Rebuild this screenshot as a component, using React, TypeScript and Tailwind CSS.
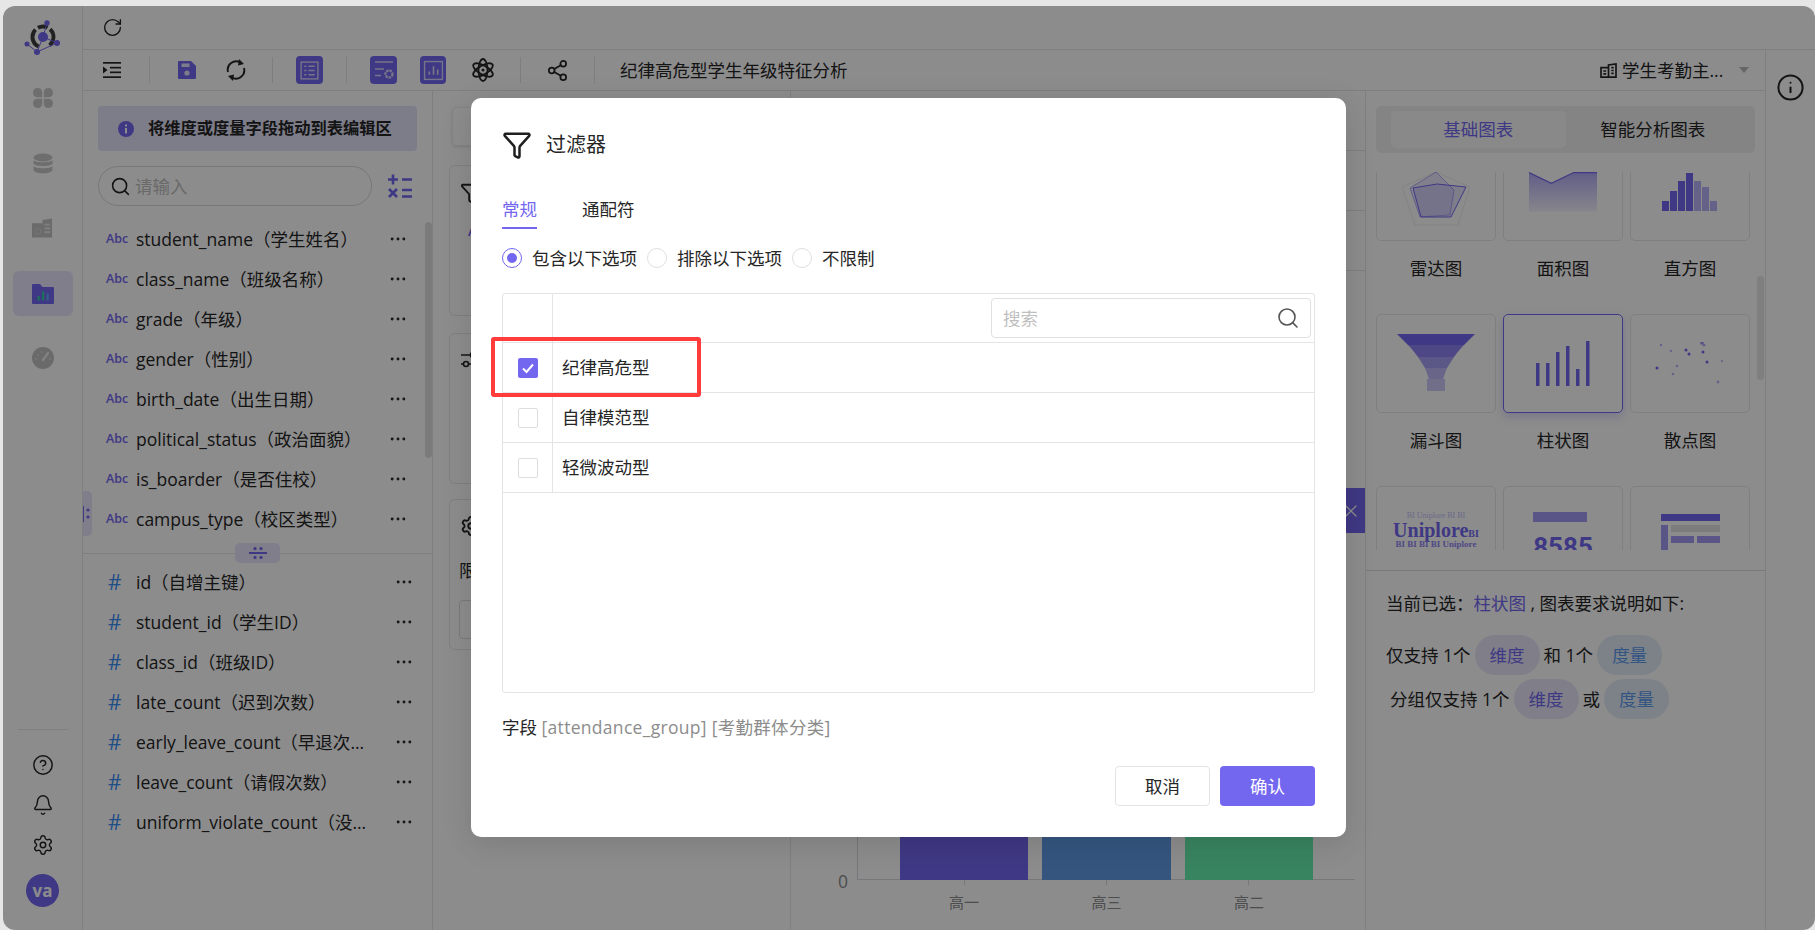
import type { ReactNode } from 'react';
import { Bell, CircleHelp, Ellipsis, Funnel, RotateCw, Search, Settings, Share2, Info, X } from 'lucide-react';

const stringFields = [
  'student_name（学生姓名）',
  'class_name（班级名称）',
  'grade（年级）',
  'gender（性别）',
  'birth_date（出生日期）',
  'political_status（政治面貌）',
  'is_boarder（是否住校）',
  'campus_type（校区类型）',
];

const numberFields = [
  'id（自增主键）',
  'student_id（学生ID）',
  'class_id（班级ID）',
  'late_count（迟到次数）',
  'early_leave_count（早退次数）',
  'leave_count（请假次数）',
  'uniform_violate_count（没穿校服次数）',
];

const filterRows = ['纪律高危型', '自律模范型', '轻微波动型'];

function Logo() {
  return (
    <svg viewBox="0 0 40 40" className="h-[40px] w-[40px]">
      <circle
        cx="20"
        cy="20"
        r="10.5"
        fill="none"
        stroke="#3c3c3c"
        strokeWidth="4"
        strokeDasharray="20 3 10 3 18 12"
        transform="rotate(115 20 20)"
      />
      <path d="M24 6L20 20L34 26M20 20L14 35L4 27M14 35L34 26" stroke="#7367f0" strokeWidth="1" fill="none" />
      <circle cx="20" cy="20" r="5" fill="#7367f0" />
      <circle cx="24" cy="6" r="2.700" fill="#7367f0" />
      <circle cx="4" cy="27" r="2.500" fill="#7367f0" />
      <circle cx="14" cy="35" r="3" fill="#7367f0" />
      <circle cx="34" cy="26" r="3" fill="#7367f0" />
    </svg>
  );
}

function Clover() {
  return (
    <svg viewBox="0 0 22 22" className="h-[22px] w-[22px]" fill="#c9c9c9">
      <path d="M10.2 10.2H5A4.600 4.600 0 1 1 10.2 5Z" />
      <path d="M11.8 10.2H17A4.600 4.600 0 1 0 11.8 5Z" />
      <path d="M10.2 11.8H5A4.600 4.600 0 1 0 10.2 17Z" />
      <path d="M11.8 11.8H17A4.600 4.600 0 1 1 11.8 17Z" />
    </svg>
  );
}

function Database() {
  return (
    <svg viewBox="0 0 22 22" className="h-[22px] w-[22px]" fill="#c9c9c9">
      <ellipse cx="11" cy="4.500" rx="9.500" ry="4" />
      <path d="M1.500 7C3 10 19 10 20.500 7V10.500C19 14 3 14 1.500 10.500Z" />
      <path d="M1.500 13C3 16 19 16 20.500 13V17C19 21.500 3 21.500 1.500 17Z" />
    </svg>
  );
}

function Building() {
  return (
    <svg viewBox="0 0 22 20" className="h-[20px] w-[21px]">
      <path d="M0 5H11V1.500L21 0V20H0Z" fill="#c4c4c4" />
      <path d="M13 5.500H19V7.500H13ZM13 9.500H19V11.500H13ZM13 13.500H19V15.500H13Z" fill="#e6e6e6" />
      <path d="M4 11H9V16H4Z" fill="none" stroke="#dadada" strokeWidth="0.800" />
    </svg>
  );
}

function FolderChart() {
  return (
    <svg viewBox="0 0 22 20" className="h-[20px] w-[22px]">
      <path d="M0 1A1 1 0 0 1 1 0H8L10.500 3H21A1 1 0 0 1 22 4V19A1 1 0 0 1 21 20H1A1 1 0 0 1 0 19Z" fill="#7367f0" />
      <rect x="5.500" y="12" width="2.300" height="4.500" fill="#36c9a5" />
      <rect x="10" y="7.500" width="2.300" height="9" fill="#36c9a5" />
      <rect x="14.500" y="9.500" width="2.300" height="7" fill="#5fa8f5" />
    </svg>
  );
}

function Gauge() {
  return (
    <svg viewBox="0 0 22 22" className="h-[22px] w-[22px]">
      <circle cx="11" cy="11" r="11" fill="#c2c2c2" />
      <path d="M11 13L16 6" stroke="#ececec" strokeWidth="2.200" strokeLinecap="round" />
      <circle cx="6" cy="8" r="1" fill="#d9d9d9" />
      <circle cx="10" cy="5" r="1" fill="#d9d9d9" />
      <circle cx="18" cy="12" r="1" fill="#d9d9d9" />
      <circle cx="4" cy="12" r="1" fill="#d9d9d9" />
    </svg>
  );
}

function IndentIcon() {
  return (
    <svg viewBox="0 0 18 16" className="h-[16px] w-[18px]" fill="#262626">
      <rect x="0" y="0" width="18" height="1.700" />
      <rect x="0" y="14.300" width="18" height="1.700" />
      <rect x="7" y="4.800" width="11" height="1.700" />
      <rect x="7" y="9.500" width="11" height="1.700" />
      <path d="M0 4.500L4.500 8L0 11.500Z" />
    </svg>
  );
}

function SaveIcon() {
  return (
    <svg viewBox="0 0 18 18" className="h-[18px] w-[18px]">
      <path d="M1 0H13L18 5V17A1 1 0 0 1 17 18H1A1 1 0 0 1 0 17V1A1 1 0 0 1 1 0Z" fill="#7367f0" />
      <rect x="3.500" y="2.500" width="8" height="3.500" fill="#e4e2fb" />
      <circle cx="9" cy="12" r="2.600" fill="#e4e2fb" />
    </svg>
  );
}

function SyncIcon() {
  return (
    <svg viewBox="0 0 20 22" className="h-[22px] w-[20px]" fill="none" stroke="#262626" strokeWidth="1.900">
      <path d="M2 13A8.500 8.500 0 0 1 14.500 3.500" />
      <path d="M18 9A8.500 8.500 0 0 1 5.500 18.500" />
      <path d="M13 0L18 5L12 6.500Z" fill="#262626" stroke="none" />
      <path d="M7 22L2 17L8 15.500Z" fill="#262626" stroke="none" />
    </svg>
  );
}

function AtomIcon() {
  return (
    <svg viewBox="0 0 22 24" className="h-[24px] w-[22px]" fill="none" stroke="#262626" strokeWidth="1.800">
      <ellipse cx="11" cy="12" rx="4.500" ry="11" />
      <ellipse cx="11" cy="12" rx="4.500" ry="11" transform="rotate(60 11 12)" />
      <ellipse cx="11" cy="12" rx="4.500" ry="11" transform="rotate(-60 11 12)" />
      <circle cx="11" cy="12" r="1.500" fill="#262626" stroke="none" />
    </svg>
  );
}

function ToolButton({ children }: { children: ReactNode }) {
  return (
    <div className="flex h-[28px] w-[27px] items-center justify-center rounded-[4px] bg-[#7367f0]">{children}</div>
  );
}

function ListIcon() {
  return (
    <svg viewBox="0 0 20 20" className="h-[21px] w-[21px]" fill="none" stroke="#d7d4f8" strokeWidth="1.300">
      <rect x="2" y="2" width="16" height="16" />
      <path d="M5 6H7M5 10H7M5 14H7M9 6H15M9 10H15M9 14H15" />
    </svg>
  );
}

function ConfigIcon() {
  return (
    <svg viewBox="0 0 22 22" className="h-[22px] w-[22px]" fill="none">
      <path d="M2 3H20M2 10H11M2 16.500H8" stroke="#d7d4f8" strokeWidth="1.700" />
      <circle cx="16" cy="15" r="3.500" stroke="#d7d4f8" strokeWidth="2.400" strokeDasharray="2.500 0.800" />
    </svg>
  );
}

function BarsIcon() {
  return (
    <svg viewBox="0 0 20 20" className="h-[21px] w-[21px]" fill="none" stroke="#d7d4f8" strokeWidth="1.300">
      <rect x="1.500" y="1.500" width="17" height="17" />
      <path d="M6 14V11M10 14V6M14 14V9" strokeWidth="1.600" />
    </svg>
  );
}

function CalcIcon() {
  return (
    <svg viewBox="0 0 26 26" className="h-[26px] w-[26px]" stroke="#7367f0" strokeWidth="2.600" fill="none">
      <path d="M1 6.500H11M6 1.500V11.500M15 6.500H25" />
      <path d="M2 16L10 24M10 16L2 24M15 17H25M15 23.500H25" />
    </svg>
  );
}

function Divider() {
  return <div className="h-[26px] w-px shrink-0 bg-[#e6e6e6]" />;
}

function FieldRow({ label, kind }: { label: string; kind: 'abc' | 'num' }) {
  return (
    <div className="flex h-[40px] items-center">
      {kind === 'abc' ? (
        <span className="w-[53px] pl-[23px] text-[12.500px] font-semibold leading-none text-[#7367f0]">Abc</span>
      ) : (
        <span className="w-[53px] pl-[25px] text-[21px] leading-none text-[#3a8cf5]">#</span>
      )}
      <span className={`truncate text-[#262626] ${kind === 'abc' ? 'w-[252px]' : 'w-[238px]'}`}>{label}</span>
      <Ellipsis className={`h-[20px] w-[20px] text-[#262626] ${kind === 'abc' ? '' : 'ml-[20px]'}`} strokeWidth={1.500} />
    </div>
  );
}

function Card({ selected, label, children }: { selected?: boolean; label?: string; children: ReactNode }) {
  return (
    <div className="flex flex-col items-center">
      <div
        className={`flex h-[99px] w-[120px] items-center justify-center overflow-hidden rounded-[5px] border ${
          selected ? 'border-[#7367f0] shadow-[0_4px_10px_rgba(115,103,240,0.25)]' : 'border-[#e8e8e8]'
        }`}
      >
        {children}
      </div>
      {label && <div className="mt-[15px] h-[24px] leading-[24px] text-[#262626]">{label}</div>}
    </div>
  );
}

function Pill({ color, children }: { color: 'violet' | 'blue'; children: ReactNode }) {
  return (
    <span
      className={`mx-[4px] inline-flex h-[40px] w-[65px] items-center justify-center rounded-full ${
        color === 'violet' ? 'bg-[#e9e6f7] text-[#7367f0]' : 'bg-[#e4edf7] text-[#5b9bef]'
      }`}
    >
      {children}
    </span>
  );
}

function FilterDialog() {
  return (
    <div className="absolute left-[471px] top-[98px] h-[739px] w-[875px] rounded-[10px] bg-white px-[31px] text-[17.500px] text-[#262626] shadow-[0_6px_30px_rgba(0,0,0,0.12)]">
      <div className="flex h-[60px] items-center pt-[33px]">
        <Funnel className="h-[30px] w-[30px] text-[#1f1f1f]" strokeWidth={2} />
        <span className="ml-[14px] text-[20px]">过滤器</span>
      </div>
      <div className="mt-[30px] flex h-[41px] items-start gap-[45px] pt-[8px]">
        <div className="h-[33px] border-b-2 border-[#7367f0] text-[#7367f0]">常规</div>
        <div>通配符</div>
      </div>
      <div className="mt-[17px] flex h-[24px] items-center">
        <span className="flex h-[20px] w-[20px] items-center justify-center rounded-full border border-[#7367f0]">
          <span className="h-[10px] w-[10px] rounded-full bg-[#7367f0]" />
        </span>
        <span className="ml-[10px] mr-[10px]">包含以下选项</span>
        <span className="h-[20px] w-[20px] rounded-full border border-[#e0e0e0]" />
        <span className="ml-[10px] mr-[10px]">排除以下选项</span>
        <span className="h-[20px] w-[20px] rounded-full border border-[#e0e0e0]" />
        <span className="ml-[10px]">不限制</span>
      </div>
      <div className="relative mt-[23px] h-[400px] w-[813px] rounded-[3px] border border-[#e4e4e4]">
        <div className="flex h-[49px] border-b border-[#e4e4e4]">
          <div className="w-[50px] border-r border-[#e4e4e4]" />
          <div className="flex flex-1 items-center justify-end pr-[3px]">
            <div className="flex h-[40px] w-[320px] items-center justify-between rounded-[4px] border border-[#e0e0e0] pl-[11px] pr-[10px]">
              <span className="text-[#bfbfbf]">搜索</span>
              <Search className="h-[24px] w-[24px] text-[#555555]" strokeWidth={1.600} />
            </div>
          </div>
        </div>
        {filterRows.map((row, i) => (
          <div key={row} className="flex h-[50px] border-b border-[#e4e4e4]">
            <div className="flex w-[50px] items-center justify-center border-r border-[#e4e4e4]">
              {i === 0 ? (
                <span className="flex h-[20px] w-[20px] items-center justify-center rounded-[2px] bg-[#7367f0]">
                  <svg viewBox="0 0 14 14" className="h-[14px] w-[14px]" fill="none" stroke="white" strokeWidth="2">
                    <path d="M2 7.500L5.500 11L12 3.500" />
                  </svg>
                </span>
              ) : (
                <span className="h-[20px] w-[20px] rounded-[2px] border border-[#dddddd]" />
              )}
            </div>
            <div className="flex items-center pl-[9px]">{row}</div>
          </div>
        ))}
        <div className="absolute left-[-12px] top-[43px] h-[60px] w-[210px] rounded-[3px] border-[4px] border-[#ff3b3b]" />
      </div>
      <div className="mt-[22px] h-[24px] leading-[24px]">
        字段 <span className="tracking-[0.3px] text-[#8c8c8c]">[attendance_group] [考勤群体分类]</span>
      </div>
      <div className="mt-[27px] flex justify-end gap-[10px]">
        <button className="h-[40px] w-[95px] rounded-[4px] border border-[#e4e4e4] bg-white">取消</button>
        <button className="h-[40px] w-[95px] rounded-[4px] bg-[#7367f0] text-white">确认</button>
      </div>
    </div>
  );
}

export default function App() {
  return (
    <div
      className="relative h-[930px] w-[1815px] overflow-hidden bg-[#e6e6e6] pl-[3px] pt-[6px] text-[17.500px]"
      style={{ fontFamily: '"Open Sans", "Noto Sans CJK SC", sans-serif' }}
    >
      <div className="flex h-[924px] w-[1812px] overflow-hidden rounded-[12px] bg-white">
        <aside className="flex w-[80px] shrink-0 flex-col items-center border-r border-[#e8e8e8]">
          <div className="mt-[11px] h-[40px] w-[40px]">
            <Logo />
          </div>
          <div className="mt-[30px] flex h-[22px] items-center"><Clover /></div>
          <div className="mt-[44px] flex h-[22px] items-center"><Database /></div>
          <div className="mt-[42px] flex h-[22px] items-center"><Building /></div>
          <div className="mt-[32px] flex h-[45px] w-[60px] items-center justify-center rounded-[6px] bg-[#e8e6fb]"><FolderChart /></div>
          <div className="mt-[31px] flex h-[22px] items-center"><Gauge /></div>
          <div className="mt-auto h-px w-[50px] bg-[#e8e8e8]" />
          <div className="mt-[24px] flex flex-col items-center gap-[18px] text-[#262626]">
            <CircleHelp className="h-[22px] w-[22px]" strokeWidth={1.600} />
            <Bell className="h-[22px] w-[22px]" strokeWidth={1.600} />
            <Settings className="h-[22px] w-[22px]" strokeWidth={1.600} />
          </div>
          <div className="mb-[23px] mt-[18px] flex h-[33px] w-[33px] items-center justify-center rounded-full bg-[#7367f0] text-[17px] font-bold leading-none text-white">va</div>
        </aside>

        <div className="flex min-w-0 flex-1 flex-col">
          <div className="flex h-[44px] items-center border-b border-[#e8e8e8] pl-[19px]">
            <RotateCw className="h-[21px] w-[21px] text-[#262626]" strokeWidth={1.600} />
          </div>

          <div className="flex min-h-0 flex-1">
            <div className="flex w-[1682px] shrink-0 flex-col">
              <div className="flex h-[41px] items-center border-b border-[#e8e8e8] text-[#262626]">
                <div className="flex w-[66px] shrink-0 justify-center pr-[8px]"><IndentIcon /></div>
                <Divider />
                <div className="flex w-[73px] shrink-0 justify-center"><SaveIcon /></div>
                <div className="flex w-[26px] shrink-0 justify-center"><SyncIcon /></div>
                <div className="w-[23px] shrink-0" />
                <Divider />
                <div className="flex w-[73px] shrink-0 justify-center"><ToolButton><ListIcon /></ToolButton></div>
                <Divider />
                <div className="flex w-[73px] shrink-0 justify-center"><ToolButton><ConfigIcon /></ToolButton></div>
                <div className="flex w-[26px] shrink-0 justify-center"><ToolButton><BarsIcon /></ToolButton></div>
                <div className="flex w-[74px] shrink-0 justify-center"><AtomIcon /></div>
                <Divider />
                <div className="flex w-[73px] shrink-0 justify-center"><Share2 className="h-[23px] w-[23px]" strokeWidth={1.800} /></div>
                <Divider />
                <span className="ml-[25px] whitespace-nowrap">纪律高危型学生年级特征分析</span>
                <div className="ml-auto flex shrink-0 items-center pr-[16px]">
                  <svg viewBox="0 0 18 16" className="h-[15px] w-[17px]" fill="none" stroke="#262626" strokeWidth="1.800">
                    <path d="M1 5H9V15H1ZM9 15V2L17 1V15H1M3.500 8.500H6.500M3.500 11.500H6.500M12 5H14.500M12 8H14.500M12 11H14.500" />
                  </svg>
                  <span className="ml-[5px] w-[102px] whitespace-nowrap">学生考勤主...</span>
                  <span className="ml-[15px] h-0 w-0 border-x-[5px] border-t-[6px] border-x-transparent border-t-[#bbbbbb]" />
                </div>
              </div>

              <div className="flex min-h-0 flex-1">
                <section className="relative flex w-[350px] shrink-0 flex-col border-r border-[#e8e8e8]">
                  <div className="px-[15px] pt-[15px]">
                    <div className="flex h-[45px] w-[319px] items-center rounded-[4px] bg-[#e4e3fa] pl-[20px] text-[16.250px] font-semibold text-[#262626]">
                      <svg viewBox="0 0 16 16" className="mr-[14px] h-[16px] w-[16px] shrink-0">
                        <circle cx="8" cy="8" r="8" fill="#7367f0" />
                        <rect x="7" y="7" width="2" height="5.500" fill="white" />
                        <rect x="7" y="3.500" width="2" height="2" fill="white" />
                      </svg>
                      将维度或度量字段拖动到表编辑区
                    </div>
                    <div className="mt-[15px] flex items-center">
                      <div className="flex h-[40px] w-[274px] items-center rounded-full border border-[#d9d9d9] pl-[11px]">
                        <Search className="h-[21px] w-[21px] text-[#262626]" strokeWidth={1.800} />
                        <span className="ml-[4px] text-[#bfbfbf]">请输入</span>
                      </div>
                      <div className="ml-[15px]"><CalcIcon /></div>
                    </div>
                  </div>
                  <div className="mt-[13px]">
                    {stringFields.map((f) => (
                      <FieldRow key={f} label={f} kind="abc" />
                    ))}
                  </div>
                  <div className="absolute right-0 top-[131px] h-[236px] w-[7px] rounded-full bg-[#e0e0e0]" />
                  <div className="absolute left-0 top-[400px] flex h-[45px] w-[9px] items-center justify-center rounded-r-[5px] bg-[#e8e6fb]">
                    <svg viewBox="0 0 9 16" className="h-[16px] w-[9px]" fill="#7367f0">
                      <rect x="0" y="0" width="1" height="16" />
                      <circle cx="5" cy="4" r="1.600" />
                      <circle cx="5" cy="11" r="1.600" />
                    </svg>
                  </div>
                  <div className="relative mt-[14px] border-t border-[#e8e8e8]">
                    <div className="absolute left-[152px] top-[-11px] flex h-[20px] w-[45px] items-center justify-center rounded-[5px] bg-[#e8e6fb]">
                      <svg viewBox="0 0 18 12" className="h-[12px] w-[18px]" fill="#7367f0">
                        <circle cx="6" cy="1.600" r="1.600" />
                        <circle cx="12" cy="1.600" r="1.600" />
                        <rect x="0" y="5" width="18" height="2" />
                        <circle cx="6" cy="10.400" r="1.600" />
                        <circle cx="12" cy="10.400" r="1.600" />
                      </svg>
                    </div>
                  </div>
                  <div className="mt-[8px]">
                    {numberFields.map((f) => (
                      <FieldRow key={f} label={f} kind="num" />
                    ))}
                  </div>
                </section>

                <section className="flex w-[358px] shrink-0 flex-col border-r border-[#e8e8e8] pl-[16px] pt-[16px]">
                  <div className="ml-[3px] h-[39px] rounded-[4px] border border-[#eeeeee] shadow-sm" />
                  <div className="mt-[19px] h-[151px] rounded-[6px] border border-[#e8e8e8] pl-[10px] pt-[16px] text-[#262626]">
                    <Funnel className="h-[22px] w-[22px]" />
                    <div className="mt-[16px] pl-[8px] text-[14px] font-semibold text-[#7367f0]">Abc</div>
                  </div>
                  <div className="mt-[17px] h-[151px] rounded-[6px] border border-[#e8e8e8] pl-[10px] pt-[16px]">
                    <svg viewBox="0 0 20 20" className="h-[20px] w-[20px]" fill="none" stroke="#262626" strokeWidth="1.600">
                      <path d="M1 5H19M1 14H19" />
                      <circle cx="13" cy="5" r="2.500" fill="white" />
                      <circle cx="6" cy="14" r="2.500" fill="white" />
                    </svg>
                  </div>
                  <div className="mt-[15px] h-[151px] rounded-[6px] border border-[#e8e8e8] pl-[9px] pt-[15px] text-[#262626]">
                    <Settings className="ml-[1px] h-[22px] w-[22px]" />
                    <div className="mt-[21px] h-[24px] leading-[24px]">限制</div>
                    <div className="mt-[18px] h-[39px] rounded-[4px] border border-[#dddddd]" />
                  </div>
                </section>

                <section className="relative min-w-0 flex-1">
                  <div className="absolute right-0 top-[59px] h-px w-[20px] bg-[#e6e6e6]" />
                  <div className="absolute right-0 top-[119px] h-px w-[20px] bg-[#e6e6e6]" />
                  <div className="absolute right-0 top-[179px] h-px w-[20px] bg-[#e6e6e6]" />
                  <div className="absolute bottom-[50px] left-[66px] right-[10px] h-[165px] border-b border-l border-[#d8d8e0]" />
                  <div className="absolute bottom-[50px] left-[109px] flex h-[100px] gap-[14px]">
                    <div className="w-[128px] bg-[#7367f0]" />
                    <div className="w-[129px] bg-[#619be7]" />
                    <div className="w-[128px] bg-[#69f0af]" />
                  </div>
                  <div className="absolute bottom-[45px] left-[173px] h-[5px] w-px bg-[#d8d8e0]" />
                  <div className="absolute bottom-[45px] left-[315px] h-[5px] w-px bg-[#d8d8e0]" />
                  <div className="absolute bottom-[45px] left-[457px] h-[5px] w-px bg-[#d8d8e0]" />
                  <div className="absolute bottom-[36px] left-[47px] text-[#8c8c8c]">0</div>
                  <div className="absolute bottom-[17px] left-[109px] flex gap-[14px] text-center text-[15px] text-[#8c8c8c]">
                    <div className="w-[128px]">高一</div>
                    <div className="w-[129px]">高三</div>
                    <div className="w-[128px]">高二</div>
                  </div>
                  <div className="absolute left-[555px] top-[397px] flex h-[45px] w-[19px] items-center justify-center bg-[#7367f0]">
                    <X className="ml-[-9px] h-[20px] w-[20px] shrink-0 text-white" strokeWidth={1.500} />
                  </div>
                </section>

                <section className="flex w-[400px] shrink-0 flex-col border-l border-[#e8e8e8]">
                  <div className="px-[10px] pt-[15px]">
                    <div className="flex h-[47px] items-center justify-between rounded-[5px] bg-[#f0f0f0] px-[15px]">
                      <div className="flex h-[37px] w-[175px] items-center justify-center rounded-[5px] bg-[#fafafa] text-[#7367f0]">基础图表</div>
                      <div className="flex h-[37px] w-[175px] items-center justify-center text-[#262626]">智能分析图表</div>
                    </div>
                  </div>
                  <div className="relative mt-[19px] h-[378px] shrink-0 overflow-hidden">
                    <div className="mt-[-30px] grid grid-cols-[120px_120px_120px] justify-start gap-x-[7px] gap-y-[34px] pl-[10px]">
                      <Card label="雷达图">
                        <svg viewBox="0 0 68 54" className="mt-[14px] h-[54px] w-[68px] shrink-0">
                          <path d="M34 0L68 15L56 53H13L0 15Z" fill="none" stroke="#eeeeee" />
                          <path d="M34 0L52 18L48 43L18 45L8 16Z" fill="#7367f0" fillOpacity="0.15" stroke="#7367f0" strokeWidth="0.500" />
                          <path d="M35 12L64 15L49 45L19 45L11 16Z" fill="#7367f0" fillOpacity="0.18" stroke="#7367f0" strokeWidth="1" />
                        </svg>
                      </Card>
                      <Card label="面积图">
                        <svg viewBox="0 0 70 40" className="h-[40px] w-[68px]">
                          <defs>
                            <linearGradient id="area" x1="0" y1="0" x2="0" y2="1">
                              <stop offset="0" stopColor="#7367f0" stopOpacity="0.55" />
                              <stop offset="1" stopColor="#7367f0" stopOpacity="0.08" />
                            </linearGradient>
                          </defs>
                          <path d="M0 0L23 11L46 0H70V40H0Z" fill="url(#area)" />
                          <path d="M0 0L23 11L46 0H70" fill="none" stroke="#7367f0" strokeWidth="1.200" />
                        </svg>
                      </Card>
                      <Card label="直方图">
                        <svg viewBox="0 0 56 38" className="h-[38px] w-[56px]">
                          <g fill="#7367f0">
                            <rect x="0" y="28" width="7" height="10" />
                            <rect x="8" y="18" width="7" height="20" />
                            <rect x="16" y="8" width="7" height="30" />
                            <rect x="24" y="0" width="7" height="38" />
                          </g>
                          <g fill="#b7b2f7">
                            <rect x="32" y="8" width="7" height="30" />
                            <rect x="40" y="14" width="7" height="24" />
                            <rect x="48" y="28" width="7" height="10" />
                          </g>
                        </svg>
                      </Card>
                      <Card label="漏斗图">
                        <svg viewBox="0 0 78 58" className="mt-[-2px] h-[58px] w-[78px]">
                          <path d="M0 0H78L67 11H11Z" fill="#7367f0" />
                          <path d="M11 11H67C62 16 60 19 57 23H21C18 19 16 16 11 11Z" fill="#8c82f3" />
                          <path d="M21 23H57L50 34H28Z" fill="#a69ef6" />
                          <path d="M28 34H50L46 45H32Z" fill="#bdb8f8" />
                          <path d="M30 45H48V57H30Z" fill="#cdc9fa" />
                        </svg>
                      </Card>
                      <Card selected label="柱状图">
                        <svg viewBox="0 0 54 46" className="h-[46px] w-[54px]" fill="#7367f0">
                          <rect x="0" y="22" width="3.500" height="23" />
                          <rect x="10" y="22" width="3.500" height="23" />
                          <rect x="20" y="11" width="3.500" height="34" />
                          <rect x="30" y="5" width="3.500" height="40" />
                          <rect x="40" y="28" width="3.500" height="17" />
                          <rect x="50" y="0" width="3.500" height="45" />
                        </svg>
                      </Card>
                      <Card label="散点图">
                        <svg viewBox="0 0 70 44" className="h-[44px] w-[70px]" fill="#7367f0">
                          <circle cx="6" cy="3" r="1.200" fillOpacity="0.5" />
                          <circle cx="16" cy="9" r="1.200" fillOpacity="0.5" />
                          <circle cx="31" cy="8" r="1.500" />
                          <circle cx="34" cy="12" r="1.500" />
                          <circle cx="47" cy="1" r="1.800" fillOpacity="0.7" />
                          <circle cx="49" cy="3" r="1.500" fillOpacity="0.5" />
                          <circle cx="48" cy="10" r="1.500" />
                          <circle cx="52" cy="20" r="1.500" />
                          <circle cx="67" cy="19" r="1.200" fillOpacity="0.4" />
                          <circle cx="22" cy="24" r="1.300" fillOpacity="0.5" />
                          <circle cx="2" cy="26" r="1.500" />
                          <circle cx="18" cy="32" r="1.300" fillOpacity="0.5" />
                          <circle cx="63" cy="40" r="1.400" fillOpacity="0.5" />
                        </svg>
                      </Card>
                      <Card>
                        <div className="flex h-[48px] w-[96px] flex-col items-center overflow-hidden whitespace-nowrap leading-none text-[#8f85f3]" style={{ fontFamily: '"Liberation Serif", serif' }}>
                          <span className="text-[8px] text-[#c4c0f8]">BI Uniplore BI BI</span>
                          <span className="text-[20px] font-bold text-[#7367f0]">Uniplore<span className="text-[10px]">BI</span></span>
                          <span className="text-[9px] font-bold">BI BI BI BI Uniplore</span>
                          <span className="text-[9px] font-bold">BI Uniplore BI</span>
                        </div>
                      </Card>
                      <Card>
                        <div className="flex flex-col items-start">
                          <div className="h-[10px] w-[54px] bg-[#a39cf5]" />
                          <div className="mt-[12px] text-[26px] font-bold leading-none text-[#7367f0]" style={{ fontFamily: '"Roboto", sans-serif' }}>8585</div>
                        </div>
                      </Card>
                      <Card>
                        <div className="grid h-[44px] w-[59px] grid-cols-[7px_1fr_1fr] grid-rows-[7px_7px_7px_7px] gap-x-[3px] gap-y-[4px]">
                          <div className="col-span-3 bg-[#7367f0]" />
                          <div className="row-span-3 bg-[#a39cf5]" />
                          <div className="col-span-2 bg-[#e2e2e2]" />
                          <div className="bg-[#a39cf5]" />
                          <div className="bg-[#a39cf5]" />
                        </div>
                      </Card>
                    </div>
                    <div className="absolute right-[1px] top-[104px] h-[104px] w-[7px] rounded-full bg-[#e8e8e8]" />
                  </div>
                  <div className="mt-[20px] border-t border-[#dcdcdc] pl-[20px] pt-[18px] text-[#262626]">
                    <div className="h-[28px] leading-[28px]">
                      当前已选：<span className="text-[#7367f0]">柱状图</span> , 图表要求说明如下:
                    </div>
                    <div className="mt-[18px] flex h-[40px] items-center">
                      仅支持 1个<Pill color="violet">维度</Pill>和 1个<Pill color="blue">度量</Pill>
                    </div>
                    <div className="mt-[4px] flex h-[40px] items-center pl-[4px]">
                      分组仅支持 1个<Pill color="violet">维度</Pill>或<Pill color="blue">度量</Pill>
                    </div>
                  </div>
                </section>
              </div>
            </div>

            <div className="flex-1 border-l border-[#e8e8e8]">
              <div className="mt-[23px] flex justify-center">
                <Info className="h-[29px] w-[29px] text-[#262626]" strokeWidth={1.700} />
              </div>
            </div>
          </div>
        </div>
      </div>

      <div className="absolute bottom-0 left-[3px] right-0 top-[6px] rounded-[12px] bg-black/45" />
      <FilterDialog />
    </div>
  );
}
